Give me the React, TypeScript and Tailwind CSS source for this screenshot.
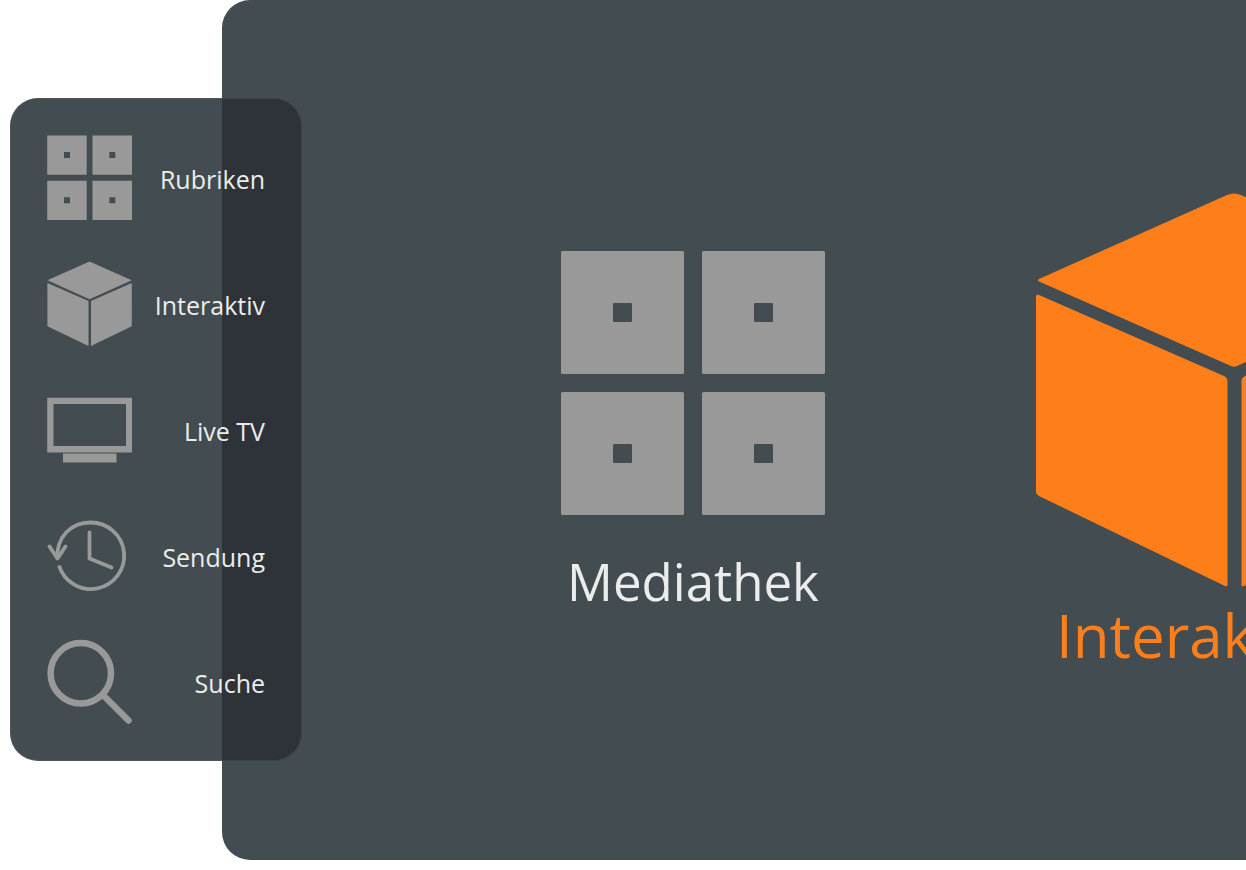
import type { ReactNode } from "react";

type IconProps = { className?: string };

function TilesIcon({ className }: IconProps) {
  return (
    <svg viewBox="0 0 264 264" className={className} fill="currentColor" fillRule="evenodd" aria-hidden="true">
      {[0, 141].map((y) =>
        [0, 141].map((x) => (
          <path
            key={`${x}-${y}`}
            transform={`translate(${x} ${y})`}
            d="M1.5 0H121.500Q123 0 123 1.500V121.500Q123 123 121.500 123H1.500Q0 123 0 121.500V1.500Q0 0 1.500 0ZM53 52Q52 52 52 53V70Q52 71 53 71H70Q71 71 71 70V53Q71 52 70 52Z"
          />
        )),
      )}
    </svg>
  );
}

function SmallTilesIcon({ className }: IconProps) {
  return (
    <svg viewBox="0 0 85 85" className={className} fill="currentColor" fillRule="evenodd" aria-hidden="true">
      {[0, 45.3].map((y) =>
        [0, 45.3].map((x) => (
          <path key={`${x}-${y}`} transform={`translate(${x} ${y})`} d="M0.200 0.400H39.700V39.700H0.200ZM17 17V23H23V17Z" />
        )),
      )}
    </svg>
  );
}

function SmallCubeIcon({ className }: IconProps) {
  return (
    <svg viewBox="0 0 85 85" className={className} fill="currentColor" aria-hidden="true">
      <path d="M42.500 0.600 84.700 19.200 42.500 38.200 0.400 19.200Z" />
      <path d="M0.400 22 41.500 40V84.900L0.400 65.200Z" />
      <path d="M84.800 22 44 40V84.900L84.800 65.200Z" />
    </svg>
  );
}

function CubeIcon({ className }: IconProps) {
  return (
    <svg viewBox="0 0 396 394" className={className} fill="currentColor" aria-hidden="true">
      <path d="M191 2Q198 -1 205 2L393 86Q395 87.500 393 88.500L201 173Q198 174.500 195 173L3 88.500Q1 87.500 3 86Z" />
      <path d="M0 103.500Q0 101 3 102L188 183Q191.500 185 191.500 188V392Q191.500 394 189 393L3 303Q0 301.500 0 299Z" />
      <path d="M396 103.500Q396 101 393 102L209 183Q205.500 185 205.500 188V392Q205.500 394 208 393L393 303Q396 301.500 396 299Z" />
    </svg>
  );
}

function TvIcon({ className }: IconProps) {
  return (
    <svg viewBox="0 0 85 85" className={className} fill="currentColor" aria-hidden="true">
      <path fillRule="evenodd" d="M0.200 10.700H85V65.500H0.200ZM6.500 17V59H79V17Z" />
      <path d="M16 66.500H69.500V75.500H16Z" />
    </svg>
  );
}

function HistoryIcon({ className }: IconProps) {
  return (
    <svg
      viewBox="0 0 85 85"
      className={className}
      fill="none"
      stroke="currentColor"
      strokeWidth="3.800"
      strokeLinejoin="round"
      aria-hidden="true"
    >
      <path d="M10.500 46C9 24 24 9.500 43.500 9.500A33.300 33.300 0 1 1 12 52.500" />
      <path strokeLinecap="round" d="M2.500 33.500 10.500 45.500 18.500 33.500M42.500 19.500V45.500L64.500 54.500" />
    </svg>
  );
}

function SearchIcon({ className }: IconProps) {
  return (
    <svg viewBox="0 0 85 85" className={className} fill="none" stroke="currentColor" strokeWidth="6.500" aria-hidden="true">
      <circle cx="33.800" cy="34.300" r="30.200" />
      <path strokeLinecap="round" d="M56 56 81.500 81.500" />
    </svg>
  );
}

const menu: { label: string; icon: ReactNode }[] = [
  { label: "Rubriken", icon: <SmallTilesIcon className="size-[85px] shrink-0" /> },
  { label: "Interaktiv", icon: <SmallCubeIcon className="size-[85px] shrink-0" /> },
  { label: "Live TV", icon: <TvIcon className="size-[85px] shrink-0" /> },
  { label: "Sendung", icon: <HistoryIcon className="size-[85px] shrink-0" /> },
  { label: "Suche", icon: <SearchIcon className="size-[85px] shrink-0" /> },
];

export default function App() {
  return (
    <div className="flex items-start overflow-hidden bg-white font-['Open_Sans','Noto_Sans',sans-serif]">
      <nav className="relative z-10 mt-[98px] -mr-20 ml-[10px] flex w-[292px] shrink-0 flex-col gap-[41px] rounded-[28px] bg-[linear-gradient(to_right,#434c50_212px,#2e3339_212px)] p-[37px] ring-1 ring-[#777777]/25 ring-inset">
        {menu.map(({ label, icon }) => (
          <button key={label} type="button" className="flex cursor-pointer items-center justify-between text-[#999999]">
            {icon}
            <span className="pt-0.5 text-[25px] leading-8 whitespace-nowrap text-[#ececec]">{label}</span>
          </button>
        ))}
      </nav>
      <main className="flex min-h-[860px] min-w-0 flex-1 items-center gap-[211px] overflow-hidden rounded-l-[28px] bg-[#434c50] pt-1 pl-[339px]">
        <button type="button" className="flex shrink-0 cursor-pointer flex-col items-center gap-[34px] text-[#999999]">
          <TilesIcon className="size-[264px]" />
          <span className="text-[51px] leading-[64px] text-[#ececec]">Mediathek</span>
        </button>
        <button type="button" className="flex shrink-0 cursor-pointer flex-col items-start gap-3 text-[#fe7f1a]">
          <CubeIcon className="h-[394px] w-[396px]" />
          <span className="pl-5 text-[60px] leading-[72px]">Interaktiv</span>
        </button>
      </main>
    </div>
  );
}
